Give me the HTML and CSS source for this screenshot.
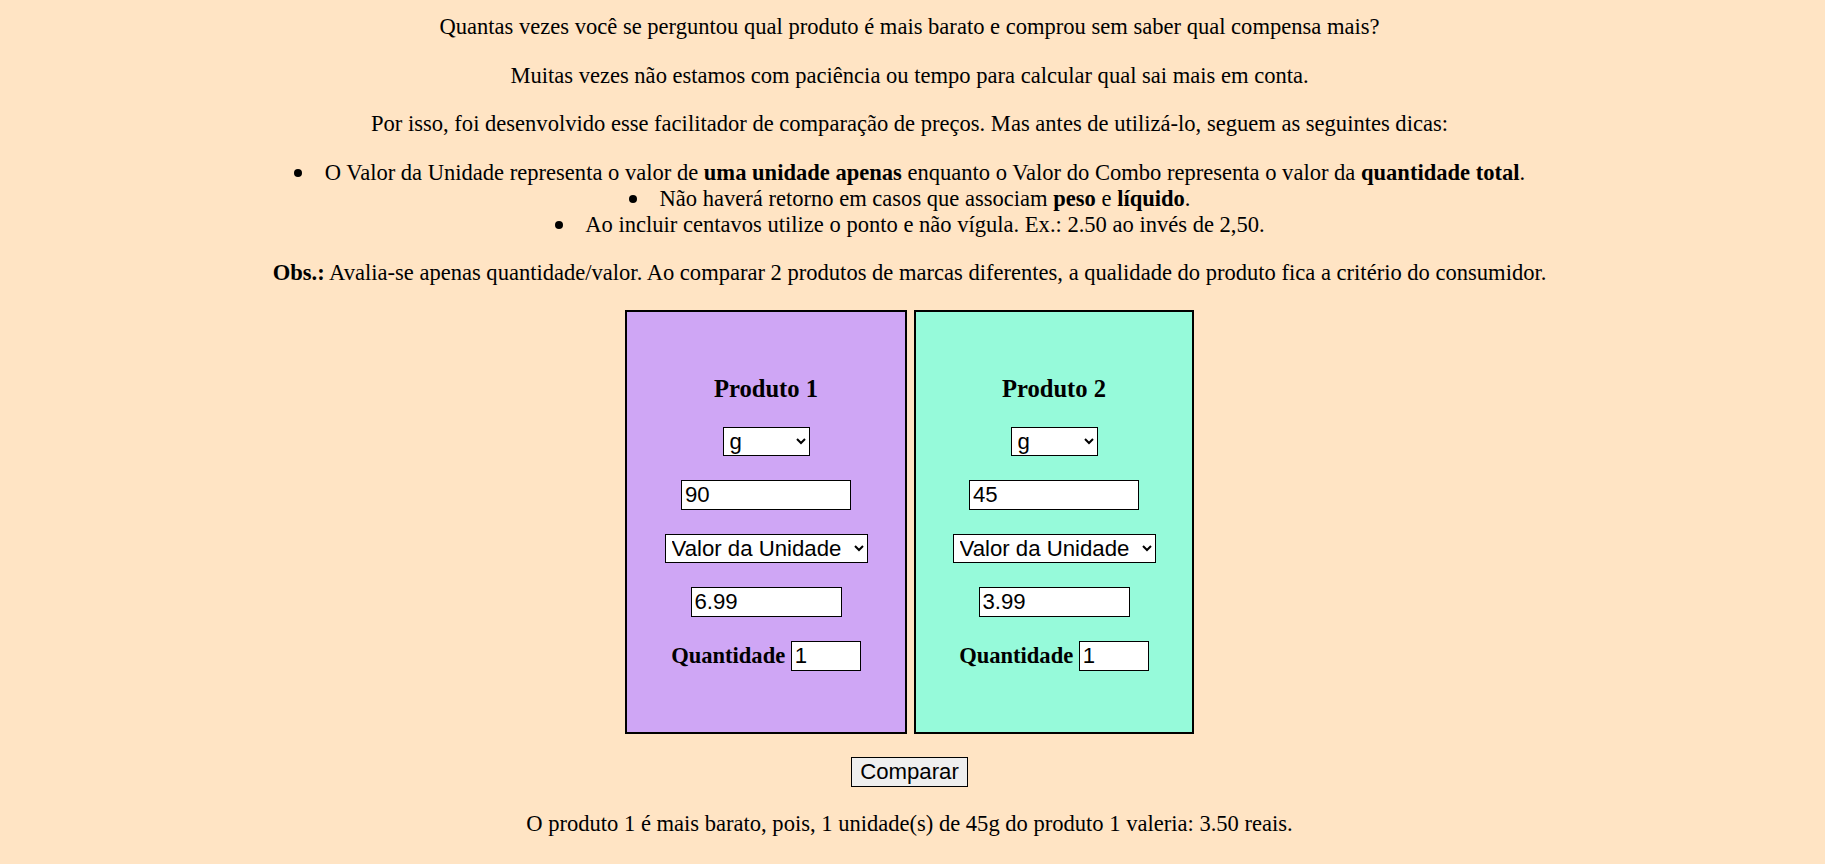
FILE: index.html
```html
<!DOCTYPE html>
<html lang="pt-BR">
<head>
<meta charset="utf-8">
<title>Comparador de preços</title>
<link rel="stylesheet" href="styles.css">
</head>
<body>
  <p class="intro">Quantas vezes você se perguntou qual produto é mais barato e comprou sem saber qual compensa mais?</p>
  <p class="intro">Muitas vezes não estamos com paciência ou tempo para calcular qual sai mais em conta.</p>
  <p class="intro">Por isso, foi desenvolvido esse facilitador de comparação de preços. Mas antes de utilizá-lo, seguem as seguintes dicas:</p>
  <ul class="dicas">
    <li>O Valor da Unidade representa o valor de <b>uma unidade apenas</b> enquanto o Valor do Combo representa o valor da <b>quantidade total</b>.</li>
    <li>Não haverá retorno em casos que associam <b>peso</b> e <b>líquido</b>.</li>
    <li>Ao incluir centavos utilize o ponto e não vígula. Ex.: 2.50 ao invés de 2,50.</li>
  </ul>
  <p class="obs"><b>Obs.:</b> Avalia-se apenas quantidade/valor. Ao comparar 2 produtos de marcas diferentes, a qualidade do produto fica a critério do consumidor.</p>

  <div class="produtos">
    <div class="produto produto-1">
      <h3 class="titulo">Produto 1</h3>
      <select class="campo unidade">
        <option>g</option>
        <option>kg</option>
        <option>ml</option>
        <option>l</option>
      </select>
      <input class="campo medida" type="text" value="90">
      <select class="campo tipo">
        <option>Valor da Unidade</option>
        <option>Valor do Combo</option>
      </select>
      <input class="campo preco" type="text" value="6.99">
      <div class="quantidade"><b>Quantidade</b> <input class="campo qtd" type="text" value="1"></div>
    </div>
    <div class="produto produto-2">
      <h3 class="titulo">Produto 2</h3>
      <select class="campo unidade">
        <option>g</option>
        <option>kg</option>
        <option>ml</option>
        <option>l</option>
      </select>
      <input class="campo medida" type="text" value="45">
      <select class="campo tipo">
        <option>Valor da Unidade</option>
        <option>Valor do Combo</option>
      </select>
      <input class="campo preco" type="text" value="3.99">
      <div class="quantidade"><b>Quantidade</b> <input class="campo qtd" type="text" value="1"></div>
    </div>
  </div>

  <div class="acoes">
    <button class="comparar" type="button">Comparar</button>
  </div>
  <p class="resultado">O produto 1 é mais barato, pois, 1 unidade(s) de 45g do produto 1 valeria: 3.50 reais.</p>
</body>
</html>
```

FILE: styles.css
```css
html {
  background: #ffe4c4;
}

body {
  margin: 0;
  padding: 14.4px 6px 0 0;
  background: #ffe4c4;
  color: #000;
  font-family: "Liberation Serif", "Times New Roman", serif;
  font-size: 22.55px;
  line-height: 26px;
  text-align: center;
}

.intro {
  margin: 0 0 22.4px;
}

.dicas {
  margin: 0 0 22px;
  padding-left: 31px;
  list-style: none;
}

.dicas li::before {
  content: "";
  display: inline-block;
  width: 8px;
  height: 8px;
  border-radius: 50%;
  background: #000;
  margin-left: -30.7px;
  margin-right: 22.7px;
  vertical-align: 2.7px;
}

.obs {
  margin: 0 0 24.6px;
}

.produtos {
  display: flex;
  justify-content: center;
  gap: 7px;
}

.produto {
  box-sizing: border-box;
  width: 282px;
  border: 2px solid #000;
  padding: 62.5px 0 61.5px;
  display: flex;
  flex-direction: column;
  align-items: center;
  gap: 24px;
}

.produto-1 {
  background: #cfa6f5;
}

.produto-2 {
  width: 280px;
  background: #96fada;
}

.titulo {
  margin: 0;
  font-size: 24.6px;
  line-height: 28px;
  font-weight: bold;
}

.campo {
  box-sizing: border-box;
  margin: 0;
  border: 1px solid #000;
  border-radius: 0;
  background-color: #fff;
  color: #000;
  font-family: "Liberation Sans", Arial, sans-serif;
  font-size: 22.2px;
}

input.campo {
  height: 30px;
  padding: 1px 3px;
}

select.campo {
  height: 29px;
  padding: 0 2px;
}

.unidade {
  width: 87px;
}

.medida {
  width: 170px;
}

.tipo {
  width: 203px;
}

.preco {
  width: 151px;
}

.quantidade {
  line-height: 26px;
}

.qtd {
  width: 70px;
  vertical-align: baseline;
}

.acoes {
  display: flex;
  justify-content: center;
  margin-top: 23px;
}

.comparar {
  box-sizing: border-box;
  height: 30px;
  margin: 0;
  padding: 1px 8px;
  border: 1px solid #000;
  border-radius: 0;
  background: #efefef;
  color: #000;
  font-family: "Liberation Sans", Arial, sans-serif;
  font-size: 22.2px;
}

.resultado {
  margin: 24px 0 0;
}
```
